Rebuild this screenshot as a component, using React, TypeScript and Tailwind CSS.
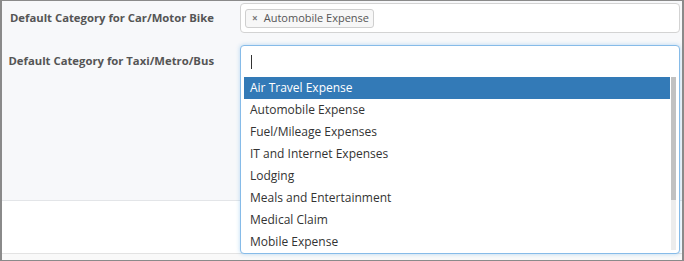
const options = [
  "Air Travel Expense",
  "Automobile Expense",
  "Fuel/Mileage Expenses",
  "IT and Internet Expenses",
  "Lodging",
  "Meals and Entertainment",
  "Medical Claim",
  "Mobile Expense",
];

const font = { fontFamily: '"Open Sans", "Liberation Sans", sans-serif' };

export default function App() {
  return (
    <div
      className="flex h-[261px] w-[684px] flex-col overflow-hidden border-y border-x-2 border-[#8a8a8a] bg-white text-[#333]"
      style={font}
    >
      <div className="h-[200px] shrink-0 border-b border-[#e3e5e8] bg-[#f7f8fa] pt-[2px]">
        <div className="grid grid-cols-[238px_440px] items-center">
          <label className="pr-[26px] text-right text-[11.3px] font-bold text-[#555]">
            Default Category for Car/Motor Bike
          </label>
          <div className="flex h-[30px] items-center rounded-[4px] border border-[#d3d3d3] bg-white px-[4px]">
            <span className="flex h-[19px] items-center gap-[6px] rounded-[3px] border border-[#cfcfcf] bg-[#f7f7f7] pl-[6px] pr-[4px] text-[11px] text-[#555]">
              <span className="text-[10px] font-bold leading-none text-[#777]">×</span>
              Automobile Expense
            </span>
          </div>
        </div>

        <div className="mt-[12px] grid grid-cols-[238px_440px] items-start">
          <label className="pr-[26px] pt-[8px] text-right text-[11.3px] font-bold text-[#555]">
            Default Category for Taxi/Metro/Bus
          </label>
          <div className="relative h-[32px]">
            <div className="absolute left-0 top-0 z-10 flex h-[209px] w-[440px] flex-col overflow-hidden rounded-[4px] border border-[#86bbe8] bg-white shadow-[0_0_4px_rgba(102,175,233,0.45)]">
              <div className="flex h-[31px] shrink-0 items-center pl-[10px]">
                <span className="h-[14px] w-px bg-[#333]" />
              </div>
              <div className="flex min-h-0 flex-1 pl-[3px] pr-[3px]">
                <ul className="flex-1 overflow-hidden">
                  {options.map((o, i) => (
                    <li
                      key={o}
                      className={
                        i === 0
                          ? "flex h-[22px] items-center bg-[#337ab7] pl-[6px] text-[12px] text-white"
                          : "flex h-[22px] items-center pl-[6px] text-[12px] text-[#333]"
                      }
                    >
                      {o}
                    </li>
                  ))}
                </ul>
                <div className="ml-px flex h-[173px] w-[5px] flex-col bg-[#ececec]">
                  <div className="h-[123px] bg-[#c1c1c1]" />
                </div>
              </div>
            </div>
          </div>
        </div>
      </div>
      <div className="h-[53px] shrink-0 border-b border-[#e3e3e3] bg-white" />
      <div className="flex-1 bg-[#f9f9f9]" />
    </div>
  );
}
